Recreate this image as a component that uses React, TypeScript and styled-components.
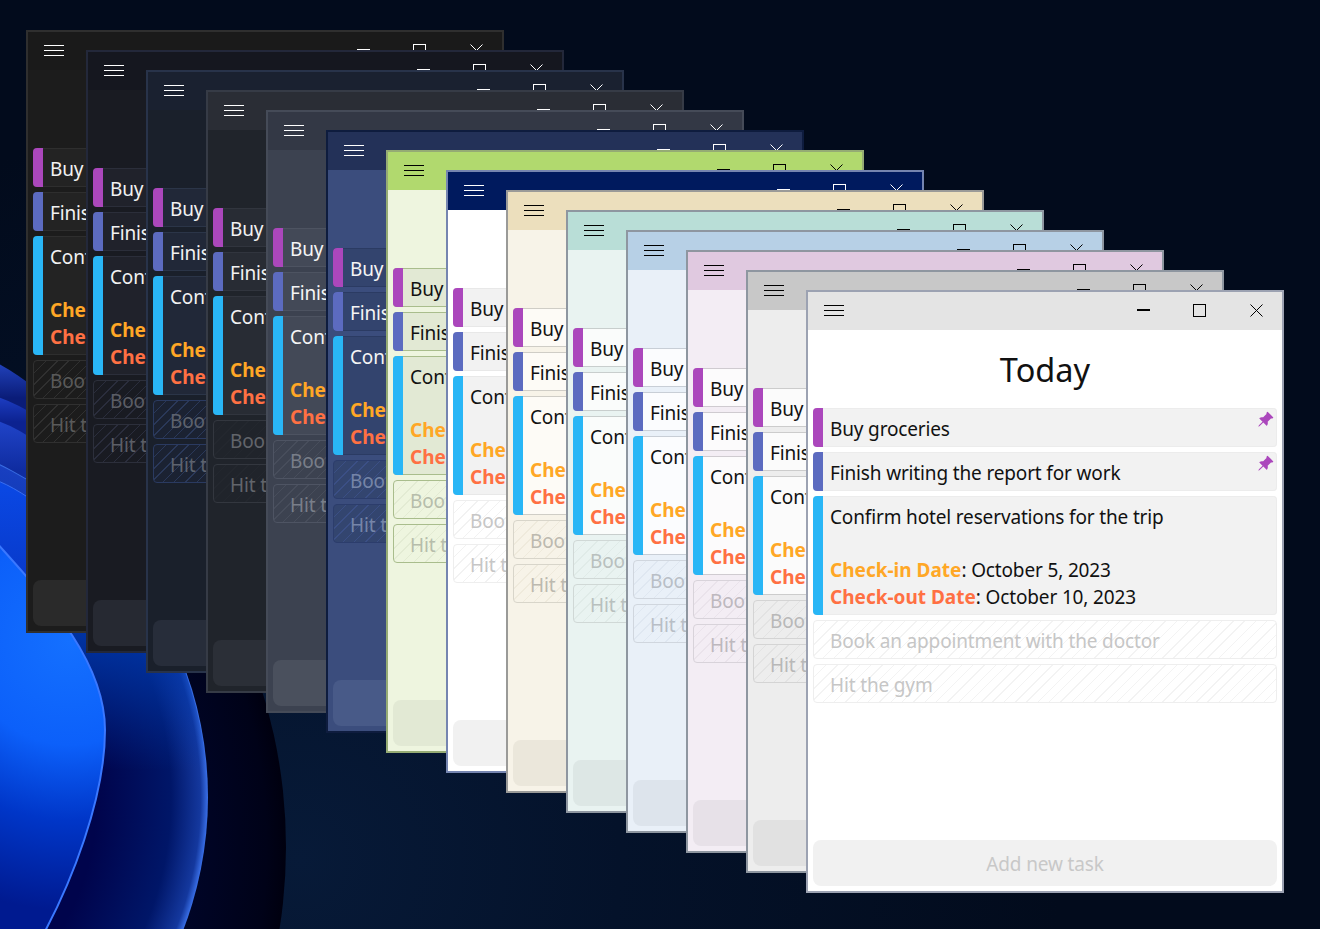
import styled, { createGlobalStyle } from "styled-components";
import { BsPinAngleFill } from "react-icons/bs";

interface Theme {
  frame: string;
  title: string;
  body: string;
  ink: string;
  glyph: string;
  card: string;
  cardLine: string;
  doneFill: string;
  doneLine: string;
  doneInk: string;
  hatch: string;
  add: string;
  addInk: string;
}

const themes: Theme[] = [
  { frame: "#2f2f2f", title: "#1a1a1a", body: "#1c1c1c", ink: "#f2f2f2", glyph: "#ffffff", card: "#232323", cardLine: "#2e2e2e", doneFill: "#1c1c1c", doneLine: "#303030", doneInk: "#5a5a5a", hatch: "#303030", add: "#2a2a2a", addInk: "#555555" },
  { frame: "#23283a", title: "#15171f", body: "#191b22", ink: "#f2f2f2", glyph: "#ffffff", card: "#20222b", cardLine: "#2b2e3a", doneFill: "#191b22", doneLine: "#2c2f3b", doneInk: "#5c5e66", hatch: "#2a2d3c", add: "#262932", addInk: "#55575f" },
  { frame: "#28334a", title: "#1a2130", body: "#1a202b", ink: "#f2f2f2", glyph: "#ffffff", card: "#212838", cardLine: "#2b3548", doneFill: "#1b2232", doneLine: "#2a3a60", doneInk: "#5e636e", hatch: "#2a3858", add: "#272d3a", addInk: "#565b66" },
  { frame: "#363b46", title: "#2a2d35", body: "#20242b", ink: "#f2f2f2", glyph: "#ffffff", card: "#282c34", cardLine: "#31353e", doneFill: "#20242b", doneLine: "#33373f", doneInk: "#62656b", hatch: "#23272e", add: "#2b2f37", addInk: "#5a5d64" },
  { frame: "#454b58", title: "#333845", body: "#3c4250", ink: "#f5f5f5", glyph: "#ffffff", card: "#434957", cardLine: "#4d5361", doneFill: "#3c4250", doneLine: "#4e5463", doneInk: "#797e89", hatch: "#474d5b", add: "#4a505d", addInk: "#757a85" },
  { frame: "#0e1c3e", title: "#233158", body: "#3b4d7d", ink: "#f5f5f5", glyph: "#ffffff", card: "#33446e", cardLine: "#2b3b63", doneFill: "#33456f", doneLine: "#2c3d6c", doneInk: "#7685a8", hatch: "#3b4f85", add: "#485a88", addInk: "#7f8db0" },
  { frame: "#95ab74", title: "#b1d96e", body: "#eef5df", ink: "#111111", glyph: "#000000", card: "#e2e9d4", cardLine: "#a9bd8c", doneFill: "#eef5df", doneLine: "#a9bd8c", doneInk: "#b6bdab", hatch: "#e3ebd3", add: "#e2e9d4", addInk: "#b6bdab" },
  { frame: "#7585b0", title: "#001a5e", body: "#ffffff", ink: "#111111", glyph: "#ffffff", card: "#f2f2f2", cardLine: "#e8e8e8", doneFill: "#ffffff", doneLine: "#eeeeee", doneInk: "#c6c6c6", hatch: "#f2f2f2", add: "#f1f1f1", addInk: "#c8c8c8" },
  { frame: "#9a9a98", title: "#ecdfbd", body: "#f7f3e8", ink: "#111111", glyph: "#000000", card: "#fdfbf6", cardLine: "#cfcdc6", doneFill: "#f7f3e8", doneLine: "#d8d5ca", doneInk: "#bcb9af", hatch: "#efeadc", add: "#ebe7db", addInk: "#c2bfb5" },
  { frame: "#8e96a0", title: "#b9ded7", body: "#e9f3f1", ink: "#111111", glyph: "#000000", card: "#fafcfb", cardLine: "#c8cecd", doneFill: "#e9f3f1", doneLine: "#d0d8d6", doneInk: "#b8c0be", hatch: "#e0ebe8", add: "#dde7e5", addInk: "#bcc6c4" },
  { frame: "#8e96a0", title: "#b7d0e6", body: "#e9f0f8", ink: "#111111", glyph: "#000000", card: "#fbfcfe", cardLine: "#c8ced6", doneFill: "#e9f0f8", doneLine: "#d0d6de", doneInk: "#b8bec6", hatch: "#dfe7f1", add: "#dde4ec", addInk: "#bcc3cc" },
  { frame: "#8e96a0", title: "#e0c9e0", body: "#f3edf4", ink: "#111111", glyph: "#000000", card: "#fcfbfc", cardLine: "#cfcbd0", doneFill: "#f3edf4", doneLine: "#d8d3da", doneInk: "#bdb8be", hatch: "#eae3eb", add: "#e7e1e8", addInk: "#c4bfc6" },
  { frame: "#8e96a0", title: "#c8c8c8", body: "#ededed", ink: "#111111", glyph: "#000000", card: "#fbfbfb", cardLine: "#cccccc", doneFill: "#ededed", doneLine: "#d4d4d4", doneInk: "#b8b8b8", hatch: "#e3e3e3", add: "#e1e1e1", addInk: "#bebebe" },
  { frame: "#9ca2b2", title: "#e4e4e4", body: "#ffffff", ink: "#111111", glyph: "#000000", card: "#f2f2f2", cardLine: "#ececec", doneFill: "#ffffff", doneLine: "#eeeeee", doneInk: "#c6c6c6", hatch: "#f3f3f3", add: "#f1f1f1", addInk: "#c8c8c8" },
];

const GlobalStyle = createGlobalStyle`
  html, body {
    margin: 0;
    padding: 0;
    background: #020c1e;
  }
  * {
    box-sizing: border-box;
  }
`;

const Desktop = styled.div`
  position: relative;
  width: 1320px;
  height: 929px;
  overflow: hidden;
  background: radial-gradient(circle at 300px 860px, #071a38 0, #04122a 320px, #020b1c 760px);
  font-family: "Noto Sans", "Open Sans", sans-serif;
`;

const Wallpaper = styled.svg`
  position: absolute;
  inset: 0;
`;

const Win = styled.div<{ $index: number; $theme: Theme }>`
  position: absolute;
  left: ${(p) => 26 + p.$index * 60}px;
  top: ${(p) => 30 + p.$index * 20}px;
  width: 478px;
  height: 603px;
  display: flex;
  flex-direction: column;
  border: 2px solid ${(p) => p.$theme.frame};
  background: ${(p) => p.$theme.body};
  color: ${(p) => p.$theme.ink};
`;

const TitleBar = styled.div<{ $theme: Theme }>`
  display: flex;
  align-items: center;
  height: 38px;
  flex: none;
  padding: 0 3px 2px 16px;
  background: ${(p) => p.$theme.title};
  color: ${(p) => p.$theme.glyph};
`;

const Controls = styled.div`
  display: flex;
  gap: 10.5px;
  margin-left: auto;
`;

const ControlBtn = styled.div`
  width: 46px;
  height: 32px;
  display: flex;
  align-items: center;
  justify-content: center;
`;

const Heading = styled.h1`
  margin: 0;
  height: 78px;
  flex: none;
  display: flex;
  align-items: center;
  justify-content: center;
  font-size: 32.5px;
  font-weight: 400;
`;

const TaskList = styled.div`
  flex: 1;
  display: flex;
  flex-direction: column;
  gap: 5px;
  padding: 0 5px;
`;

const Task = styled.div<{ $theme: Theme; $accent: string }>`
  position: relative;
  min-height: 39px;
  padding: 8px 24px 4.4px 17px;
  border-radius: 4px;
  overflow: hidden;
  box-shadow: inset 0 0 0 1px ${(p) => p.$theme.cardLine};
  background: ${(p) => p.$theme.card};
  font-size: 19px;
  letter-spacing: -0.15px;
  line-height: 26.6px;
  white-space: nowrap;

  &::before {
    content: "";
    position: absolute;
    left: 0;
    top: 0;
    bottom: 0;
    width: 10px;
    background: ${(p) => p.$accent};
  }
`;

const DoneTask = styled.div<{ $theme: Theme }>`
  min-height: 39px;
  padding: 7px 24px 3.4px 16px;
  border-radius: 4px;
  border: 1px solid ${(p) => p.$theme.doneLine};
  color: ${(p) => p.$theme.doneInk};
  font-size: 19px;
  letter-spacing: -0.15px;
  line-height: 26.6px;
  white-space: nowrap;
  background-color: ${(p) => p.$theme.doneFill};
  background-image: repeating-linear-gradient(
    135deg,
    ${(p) => p.$theme.hatch} 0,
    ${(p) => p.$theme.hatch} 1px,
    transparent 1px,
    transparent 8px
  );
`;

const Pin = styled(BsPinAngleFill)`
  position: absolute;
  top: 3px;
  right: 3px;
  width: 17px;
  height: 17px;
  color: #ab47bc;
`;

const Blank = styled.div`
  height: 26.6px;
`;

const Label = styled.span<{ $color: string }>`
  color: ${(p) => p.$color};
  font-weight: 700;
  letter-spacing: 0;
`;

const AddTask = styled.div<{ $theme: Theme }>`
  flex: none;
  height: 46px;
  margin: 0 5px 5px;
  padding-top: 2px;
  border-radius: 8px;
  display: flex;
  align-items: center;
  justify-content: center;
  background: ${(p) => p.$theme.add};
  color: ${(p) => p.$theme.addInk};
  font-size: 19px;
  letter-spacing: -0.15px;
`;

const MenuIcon = () => (
  <svg width="20" height="11" viewBox="0 0 20 11" stroke="currentColor" strokeWidth="1" shapeRendering="crispEdges">
    <path d="M0 .5h20M0 5.5h20M0 10.5h20" />
  </svg>
);

const MinIcon = () => (
  <svg width="13" height="2" viewBox="0 0 13 2" fill="currentColor">
    <rect width="13" height="2" />
  </svg>
);

const MaxIcon = () => (
  <svg width="13" height="13" viewBox="0 0 13 13" fill="none" stroke="currentColor" shapeRendering="crispEdges">
    <rect x=".5" y=".5" width="12" height="12" />
  </svg>
);

const CloseIcon = () => (
  <svg width="13" height="13" viewBox="0 0 13 13" fill="none" stroke="currentColor">
    <path d="M.5.5l12 12M12.5.5l-12 12" />
  </svg>
);

const TodoWindow = ({ index, theme }: { index: number; theme: Theme }) => (
  <Win $index={index} $theme={theme}>
    <TitleBar $theme={theme}>
      <MenuIcon />
      <Controls>
        <ControlBtn><MinIcon /></ControlBtn>
        <ControlBtn><MaxIcon /></ControlBtn>
        <ControlBtn><CloseIcon /></ControlBtn>
      </Controls>
    </TitleBar>
    <Heading>Today</Heading>
    <TaskList>
      <Task $theme={theme} $accent="#ab47bc">
        Buy groceries
        <Pin />
      </Task>
      <Task $theme={theme} $accent="#5c6bc0">
        Finish writing the report for work
        <Pin />
      </Task>
      <Task $theme={theme} $accent="#29b6f6">
        Confirm hotel reservations for the trip
        <Blank />
        <div><Label $color="#ffa726">Check-in Date</Label>: October 5, 2023</div>
        <div><Label $color="#ff7043">Check-out Date</Label>: October 10, 2023</div>
      </Task>
      <DoneTask $theme={theme}>Book an appointment with the doctor</DoneTask>
      <DoneTask $theme={theme}>Hit the gym</DoneTask>
    </TaskList>
    <AddTask $theme={theme}>Add new task</AddTask>
  </Win>
);

// the petals of the bloom that show in the strip left of the first window
const petals = [
  { id: "p1", d: "M-5 362 Q15 372 40 392 V640 H-5Z", top: 365, end: 398, from: "#2040b8", to: "#0a1c78" },
  { id: "p2", d: "M-5 396 Q15 402 40 418 V640 H-5Z", top: 398, end: 422, from: "#1c3cc0", to: "#0c2290" },
  { id: "p3", d: "M-5 420 Q15 426 40 444 V640 H-5Z", top: 422, end: 470, from: "#2044c8", to: "#0f2ca0" },
];

const Bloom = () => (
  <Wallpaper width="1320" height="929" viewBox="0 0 1320 929">
    <defs>
      <radialGradient id="outer" gradientUnits="userSpaceOnUse" cx="0" cy="0" r="1" gradientTransform="translate(-354 847) scale(640 578)">
        <stop offset="0.8" stopColor="#00062e" />
        <stop offset="0.97" stopColor="#000218" />
        <stop offset="1" stopColor="#00000f" />
      </radialGradient>
      <radialGradient id="middle" gradientUnits="userSpaceOnUse" cx="-162" cy="797" r="370">
        <stop offset="0.7" stopColor="#00044c" />
        <stop offset="0.9" stopColor="#001668" />
        <stop offset="0.98" stopColor="#14389e" />
        <stop offset="1" stopColor="#3a70e8" />
      </radialGradient>
      <linearGradient id="middleTop" gradientUnits="userSpaceOnUse" x1="0" y1="440" x2="0" y2="770">
        <stop offset="0" stopColor="#1c40c4" stopOpacity="1" />
        <stop offset="0.6" stopColor="#0036a8" stopOpacity="0.9" />
        <stop offset="1" stopColor="#0036a8" stopOpacity="0" />
      </linearGradient>
      <linearGradient id="crescent" gradientUnits="userSpaceOnUse" x1="0" y1="484" x2="0" y2="600">
        <stop offset="0" stopColor="#0a48e4" />
        <stop offset="1" stopColor="#0836c4" />
      </linearGradient>
      <radialGradient id="inner" gradientUnits="userSpaceOnUse" cx="70" cy="640" r="300">
        <stop offset="0" stopColor="#1470ff" />
        <stop offset="0.35" stopColor="#0c60fa" />
        <stop offset="0.6" stopColor="#0036c8" />
        <stop offset="0.9" stopColor="#001a90" />
      </radialGradient>
      {petals.map((p) => (
        <linearGradient key={p.id} id={p.id} gradientUnits="userSpaceOnUse" x1="0" y1={p.top} x2="0" y2={p.end}>
          <stop offset="0" stopColor={p.from} />
          <stop offset="1" stopColor={p.to} />
        </linearGradient>
      ))}
    </defs>
    <ellipse cx="-354" cy="847" rx="640" ry="578" fill="url(#outer)" />
    {petals.map((p) => (
      <path key={p.id} d={p.d} fill={`url(#${p.id})`} />
    ))}
    <circle cx="-162" cy="797" r="370" fill="url(#middle)" />
    <circle cx="-162" cy="797" r="369" fill="url(#middleTop)" />
    <path d="M-5 480 Q15 486 60 520 V640 H-5Z" fill="url(#crescent)" stroke="#4a80ff" strokeOpacity="0.7" />
    <path
      d="M-5 541 C45 597 105 660 105 730 C105 800 70 885 43 935 L-5 935Z"
      fill="url(#inner)"
      stroke="#3a78ff"
      strokeWidth="2"
    />
  </Wallpaper>
);

const App = () => (
  <>
    <GlobalStyle />
    <Desktop>
      <Bloom />
      {themes.map((theme, i) => (
        <TodoWindow key={i} index={i} theme={theme} />
      ))}
    </Desktop>
  </>
);

export default App;
